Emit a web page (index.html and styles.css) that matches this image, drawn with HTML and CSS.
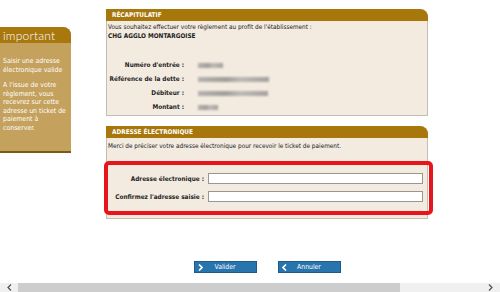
FILE: index.html
```html
<!DOCTYPE html>
<html lang="fr">
<head>
    <meta charset="UTF-8">
    <title>Paiement - Adresse électronique</title>
    <link rel="stylesheet" href="styles.css">
</head>
<body>
    <div class="page">
        <div class="sidebar">
            <div class="sidebar-head">important</div>
            <div class="sidebar-body">
                <p>Saisir une adresse électronique valide</p>
                <p>A l'issue de votre règlement, vous recevrez sur cette adresse un ticket de paiement à conserver.</p>
            </div>
        </div>

        <div class="main">
            <div class="panel">
                <div class="panel-head">RÉCAPITULATIF</div>
                <div class="panel-body">
                    <p class="intro">Vous souhaitez effectuer votre règlement au profit de l'établissement :<br><b>CHG AGGLO MONTARGOISE</b></p>
                    <div class="recap">
                        <div class="row"><span class="label">Numéro d'entrée :</span><span class="blur" style="width: 25px"></span></div>
                        <div class="row"><span class="label">Référence de la dette :</span><span class="blur" style="width: 71px"></span></div>
                        <div class="row"><span class="label">Débiteur :</span><span class="blur" style="width: 70px"></span></div>
                        <div class="row"><span class="label">Montant :</span><span class="blur" style="width: 20px"></span></div>
                    </div>
                </div>
            </div>

            <div class="panel second">
                <div class="panel-head">ADRESSE ÉLECTRONIQUE</div>
                <div class="panel-body">
                    <p class="intro">Merci de préciser votre adresse électronique pour recevoir le ticket de paiement.</p>
                    <form class="mail-box">
                        <div class="field"><label for="mail">Adresse électronique :</label><input type="text" id="mail"></div>
                        <div class="field"><label for="mail2">Confirmez l'adresse saisie :</label><input type="text" id="mail2"></div>
                    </form>
                </div>
            </div>

            <div class="actions">
                <button class="btn">
                    <svg class="chev" width="5" height="7" viewBox="0 0 5 7"><path d="M1 0.5 L4 3.5 L1 6.5" fill="none" stroke="#fff" stroke-width="1.6"/></svg>
                    Valider
                </button>
                <button class="btn">
                    <svg class="chev" width="5" height="7" viewBox="0 0 5 7"><path d="M4 0.5 L1 3.5 L4 6.5" fill="none" stroke="#fff" stroke-width="1.6"/></svg>
                    Annuler
                </button>
            </div>
        </div>
    </div>

    <div class="hscroll">
        <svg class="arrow" width="18" height="9" viewBox="0 0 18 9"><path d="M11 1.5 L8 4.5 L11 7.5" fill="none" stroke="#505050" stroke-width="1.2"/></svg>
        <div class="thumb"></div>
        <svg class="arrow right" width="18" height="9" viewBox="0 0 18 9"><path d="M7 1.5 L10 4.5 L7 7.5" fill="none" stroke="#505050" stroke-width="1.2"/></svg>
    </div>
</body>
</html>
```

FILE: styles.css
```css
body {
    margin: 0;
    font-family: "DejaVu Sans Condensed", "DejaVu Sans", sans-serif;
    font-size: 6.4px;
    color: #222;
    background-color: #fff;
}
p {
    margin: 0;
}
.page {
    display: flex;
    height: 283px;
}
.sidebar {
    width: 71px;
    height: 124px;
    margin-top: 27px;
    background-color: #c4a15c;
    border-top-right-radius: 8px;
    border-bottom: 2px solid #7b5a14;
    color: #fff;
}
.sidebar-head {
    height: 16px;
    line-height: 18px;
    padding-left: 3px;
    background-color: #a8780e;
    border-top-right-radius: 8px;
    font-family: Lato, "DejaVu Sans", sans-serif;
    font-weight: 300;
    font-size: 12px;
    letter-spacing: 0.2px;
}
.sidebar-body {
    padding: 14px 3px 0 3px;
    font-size: 6.9px;
    line-height: 8.5px;
}
.sidebar-body p {
    margin-bottom: 7px;
}
.main {
    margin-left: 35px;
    width: 322px;
    padding-top: 9px;
}
.panel {
    background-color: #f3eae0;
    border: 1px solid #c5bdb2;
    border-top: none;
    border-top-right-radius: 8px;
}
.panel.second {
    margin-top: 10px;
}
.panel-head {
    height: 12px;
    line-height: 12px;
    margin: 0 -1px;
    padding-left: 6px;
    background-color: #a8770c;
    border-top-right-radius: 8px;
    color: #fff;
    font-weight: bold;
}
.panel-body {
    padding: 2px 1px 0;
}
.intro {
    line-height: 9px;
}
.second .intro {
    padding-top: 2px;
}
.recap {
    padding-top: 17px;
    padding-bottom: 1px;
}
.row {
    display: flex;
    align-items: center;
    height: 14px;
}
.row .label {
    width: 76px;
    text-align: right;
    font-weight: bold;
    margin-right: 14px;
}
.blur {
    display: inline-block;
    height: 5px;
    background: linear-gradient(90deg, #b5b1ae, #a19d9a 40%, #bdb9b6 60%, #a5a19e);
    filter: blur(0.9px);
}
.mail-box {
    margin: 10px -7px 3px -4px;
    padding: 8px 6px 9px 0;
    border: 4px solid #e8141c;
    border-radius: 5px;
}
.field {
    display: flex;
    align-items: center;
    height: 11px;
}
.field + .field {
    margin-top: 7px;
}
.field label {
    width: 96px;
    text-align: right;
    font-weight: bold;
    margin-right: 4px;
}
.field input {
    flex: 1;
    height: 11px;
    box-sizing: border-box;
    margin: 0;
    padding: 0 2px;
    border: 1px solid #9a9690;
    background-color: #fff;
}
.actions {
    display: flex;
    justify-content: center;
    gap: 21px;
    margin-top: 42px;
}
.btn {
    position: relative;
    width: 63px;
    height: 12px;
    padding: 0;
    border: 1px solid #1c5b8a;
    background-color: #2874ac;
    color: #fff;
    font-family: "DejaVu Sans Condensed", "DejaVu Sans", sans-serif;
    font-size: 6.8px;
    text-align: center;
    cursor: pointer;
}
.chev {
    position: absolute;
    left: 3px;
    top: 2px;
}
.hscroll {
    display: flex;
    align-items: center;
    height: 9px;
    background-color: #f0f0f0;
}
.arrow.right {
    margin-left: auto;
}
.thumb {
    width: 382px;
    height: 9px;
    background-color: #cdcdcd;
}
```
